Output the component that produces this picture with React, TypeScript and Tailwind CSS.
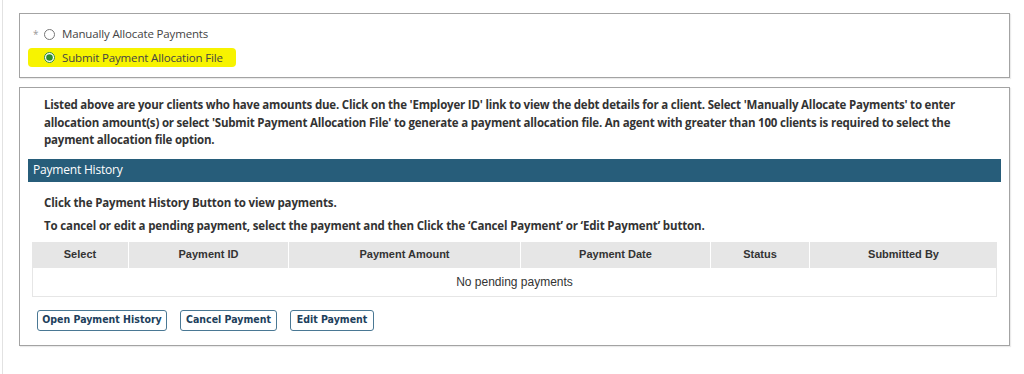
export default function App() {
  const cols = [
    { label: 'Select', w: 'w-[96px]' },
    { label: 'Payment ID', w: 'w-[160px]' },
    { label: 'Payment Amount', w: 'w-[232px]' },
    { label: 'Payment Date', w: 'w-[190px]' },
    { label: 'Status', w: 'w-[99px]' },
    { label: 'Submitted By', w: 'flex-1' },
  ];

  return (
    <div className="h-[374px] w-[1024px] bg-white font-['Open_Sans',sans-serif] text-[#333]">
      <div className="ml-[2px] flex h-full flex-col border-l border-[#e2e2e2] pt-[13px] pl-[16px]">
        {/* Allocation method */}
        <div className="flex h-[65px] w-[991px] flex-col border border-[#a3a3a3] pt-[11px] pl-[13px] shadow-[1px_1px_1px_rgba(0,0,0,0.08)]">
          <label className="flex h-[18px] items-center text-[11.5px] tracking-[-0.15px] text-[#444]">
            <span className="mr-[7px] w-[4px] text-[10px] text-[#999]">*</span>
            <input type="radio" name="alloc" className="m-0 h-[11px] w-[11px] accent-[#2e7d32]" />
            <span className="ml-[7px]">Manually Allocate Payments</span>
          </label>
          <label className="-ml-[5px] mt-[5px] flex h-[19px] w-[208px] items-center rounded-[4px] bg-[#f7f300] pl-[16px] text-[11.5px] tracking-[-0.15px] text-[#444]">
            <input type="radio" name="alloc" defaultChecked className="m-0 h-[11px] w-[11px] accent-[#2e8b2e]" />
            <span className="ml-[7px]">Submit Payment Allocation File</span>
          </label>
        </div>

        {/* Payment history section */}
        <div className="mt-[9px] flex h-[259px] w-[991px] flex-col border border-[#a3a3a3] px-[8px] shadow-[1px_1px_1px_rgba(0,0,0,0.08)]">
          <p className="mt-[8px] px-[16px] text-[11.5px] font-bold leading-[17.5px] tracking-[-0.2px] text-[#333]">
            Listed above are your clients who have amounts due. Click on the 'Employer ID' link to view the debt details for a client. Select 'Manually Allocate Payments' to enter allocation amount(s) or select 'Submit Payment Allocation File' to generate a payment allocation file. An agent with greater than 100 clients is required to select the payment allocation file option.
          </p>

          <div className="mt-[10px] flex h-[23px] items-center bg-[#275d7a] pl-[5px] text-[12px] tracking-[-0.2px] text-white">
            Payment History
          </div>

          <div className="px-[16px] pt-[12px] text-[11.5px] font-bold tracking-[-0.15px] text-[#333]">
            <div className="leading-[17px]">Click the Payment History Button to view payments.</div>
            <div className="mt-[6px] leading-[17px]">
              To cancel or edit a pending payment, select the payment and then Click the ‘Cancel Payment’ or ‘Edit Payment’ button.
            </div>
          </div>

          <div className="mx-[4px] mt-[8px] flex flex-col font-['Liberation_Sans',Arial,sans-serif]">
            <div className="flex h-[26px] bg-[#e6e6e6] text-[11px] font-bold text-[#333]">
              {cols.map((c, i) => (
                <div
                  key={c.label}
                  className={`${c.w} flex items-center justify-center ${i > 0 ? 'border-l border-white' : ''}`}
                >
                  {c.label}
                </div>
              ))}
            </div>
            <div className="flex h-[29px] items-center justify-center border border-t-0 border-[#e6e6e6] text-[12px] text-[#333]">
              No pending payments
            </div>
          </div>

          <div className="mt-[13px] flex gap-[13px] pl-[9px] font-['DejaVu_Sans_Condensed','DejaVu_Sans',sans-serif] text-[10.5px] font-bold text-[#21405c]">
            <button className="h-[21px] w-[130px] rounded-[3px] border border-[#4a7894] bg-white">Open Payment History</button>
            <button className="h-[21px] w-[97px] rounded-[3px] border border-[#4a7894] bg-white">Cancel Payment</button>
            <button className="h-[21px] w-[84px] rounded-[3px] border border-[#4a7894] bg-white">Edit Payment</button>
          </div>
        </div>
      </div>
    </div>
  );
}
